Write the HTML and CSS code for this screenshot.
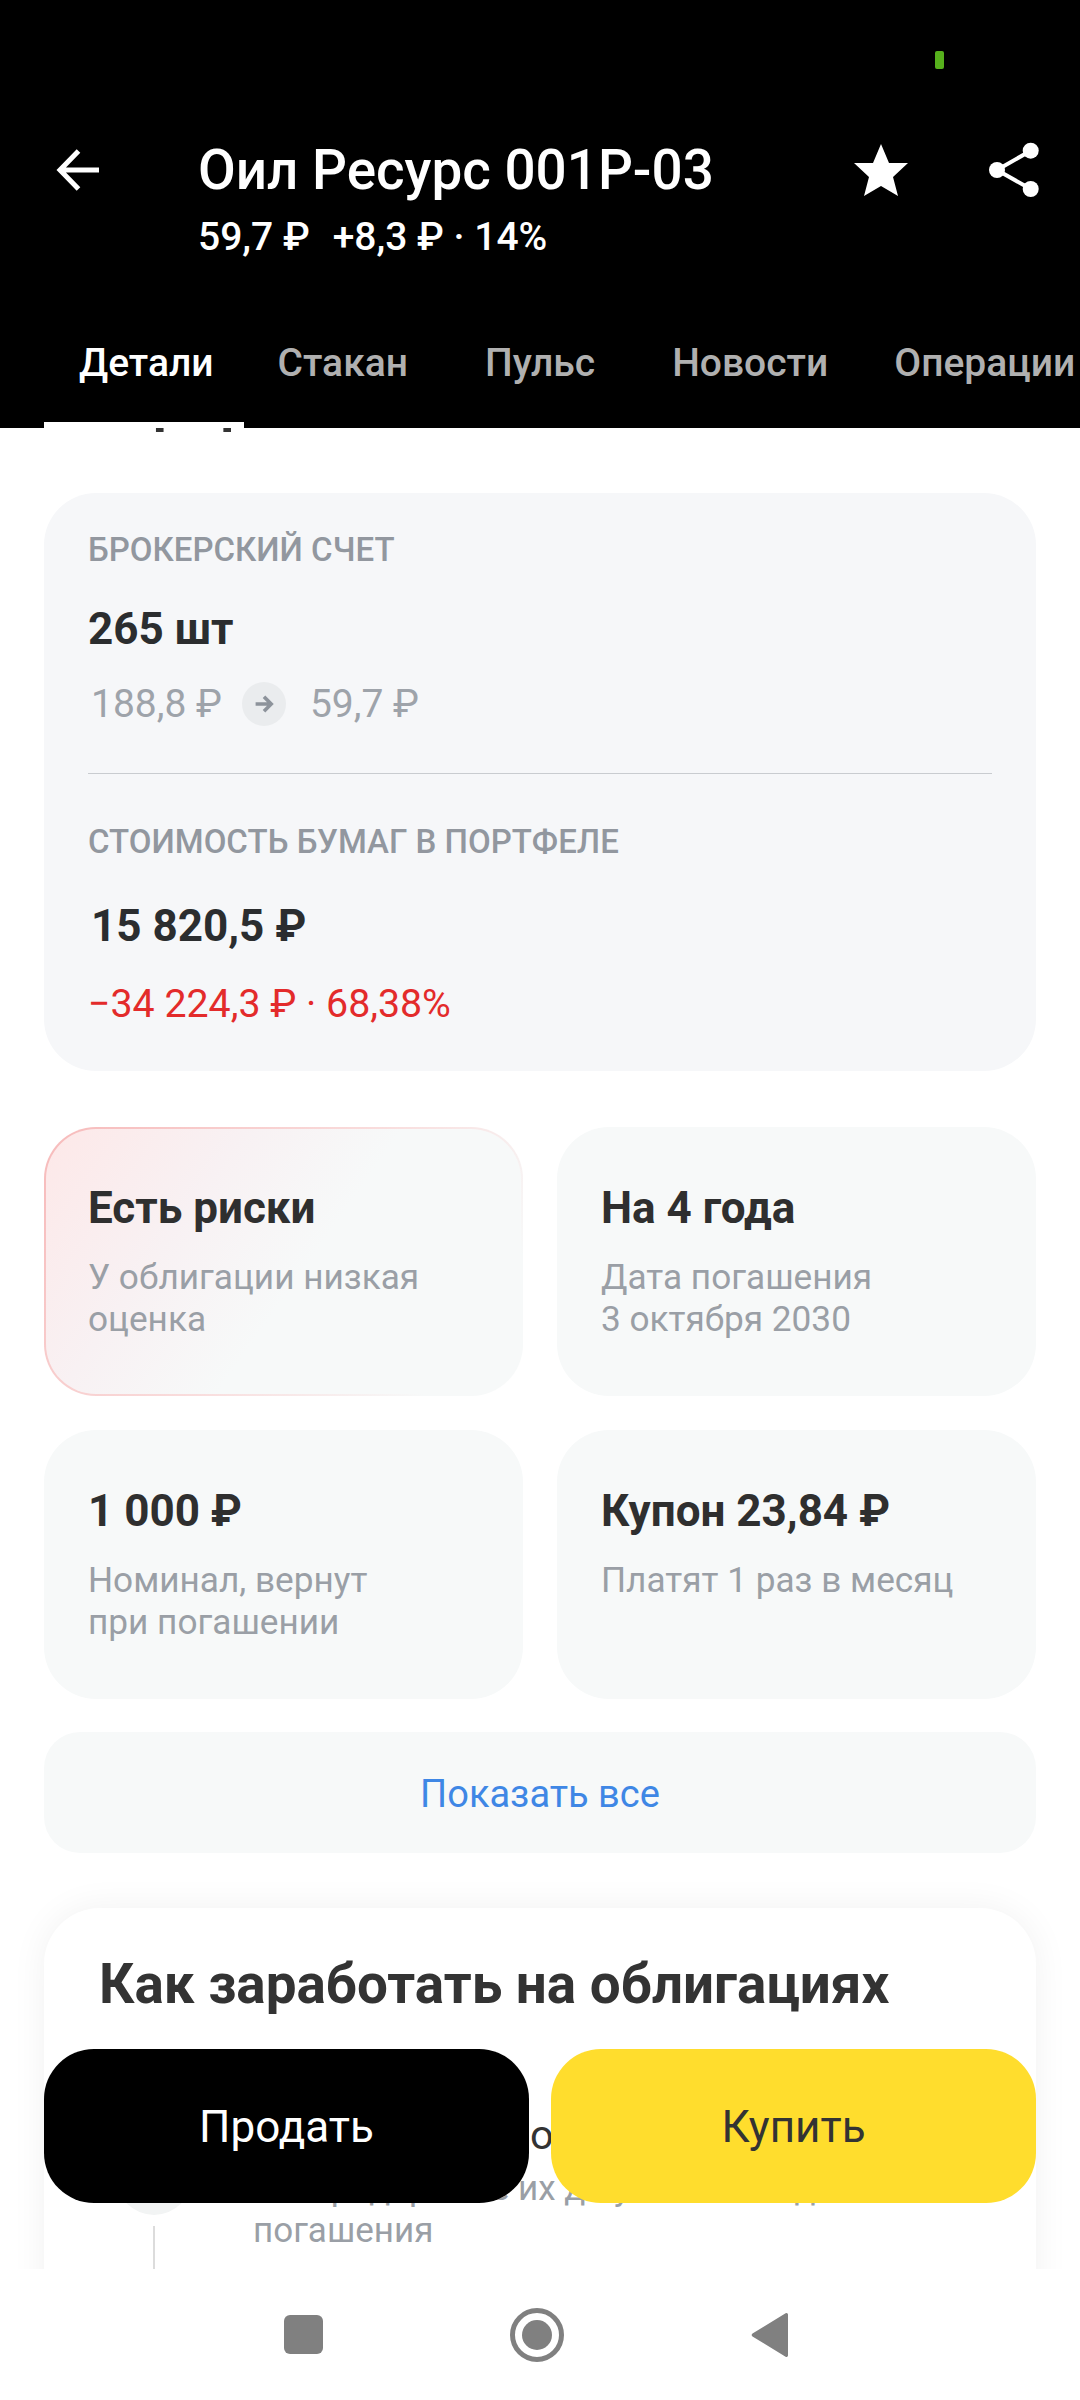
FILE: index.html
```html
<!DOCTYPE html>
<html lang="ru">
<head>
<meta charset="utf-8">
<title>Оил Ресурс 001P-03</title>
<link rel="stylesheet" href="styles.css">
</head>
<body>
<div class="page">
	<header class="top">
		<div class="status"><span class="signal"></span></div>
		<div class="bar">
			<svg class="back" viewBox="0 0 48 48" width="48" height="48"><path d="M45 24H6M24.500 5 6 24l18.500 19" fill="none" stroke="#fff" stroke-width="5"/></svg>
			<div class="heading">
				<div class="title">Оил Ресурс 001P-03</div>
				<div class="quote"><span>59,7 ₽</span><span>+8,3 ₽ · 14%</span></div>
			</div>
			<svg class="star" viewBox="0 0 54 52" width="54" height="52"><path d="M27 0l8 19h19L39 33l5 19-17-10-17 10 5-19L0 19h19z" fill="#fff"/></svg>
			<svg class="share" viewBox="0 0 50 55" width="50" height="55"><path d="M41.700 8.700 8 28l33.700 19" fill="none" stroke="#fff" stroke-width="4"/><circle cx="41.700" cy="8.700" r="8" fill="#fff"/><circle cx="8" cy="28" r="8" fill="#fff"/><circle cx="41.700" cy="47" r="8" fill="#fff"/></svg>
		</div>
		<nav class="tabs">
			<a class="tab active">Детали</a>
			<a class="tab">Стакан</a>
			<a class="tab">Пульс</a>
			<a class="tab">Новости</a>
			<a class="tab">Операции</a>
		</nav>
	</header>

	<main class="content">
		<h2 class="cut">В портфеле</h2>

		<section class="holding">
			<div class="label">БРОКЕРСКИЙ СЧЕТ</div>
			<div class="amount">265 шт</div>
			<div class="prices">
				<span>188,8 ₽</span>
				<span class="arrow"><svg viewBox="0 0 20 20" width="24" height="24"><path d="M3 10h13M10 4l6 6-6 6" fill="none" stroke="#8d939b" stroke-width="3"/></svg></span>
				<span>59,7 ₽</span>
			</div>
			<hr class="rule">
			<div class="label">СТОИМОСТЬ БУМАГ В ПОРТФЕЛЕ</div>
			<div class="amount sum">15 820,5 ₽</div>
			<div class="loss">−34 224,3 ₽ · 68,38%</div>
		</section>

		<section class="facts">
			<div class="fact risk">
				<div class="fact-title">Есть риски</div>
				<div class="fact-text">У облигации низкая<br>оценка</div>
			</div>
			<div class="fact">
				<div class="fact-title">На 4 года</div>
				<div class="fact-text">Дата погашения<br>3 октября 2030</div>
			</div>
			<div class="fact">
				<div class="fact-title">1 000 ₽</div>
				<div class="fact-text">Номинал, вернут<br>при погашении</div>
			</div>
			<div class="fact">
				<div class="fact-title">Купон 23,84 ₽</div>
				<div class="fact-text">Платят 1 раз в месяц</div>
			</div>
		</section>

		<a class="show-all">Показать все</a>

		<section class="guide">
			<h3 class="guide-title">Как заработать на облигациях</h3>
			<div class="step">
				<div class="step-mark"><span class="dot"></span><span class="line"></span></div>
				<div class="step-body">
					<div class="step-name">Вы покупаете облигации</div>
					<div class="step-text">Вы продержите их до указанной даты<br>погашения</div>
				</div>
			</div>
		</section>
	</main>

	<div class="actions">
		<a class="btn sell">Продать</a>
		<a class="btn buy">Купить</a>
	</div>

	<footer class="navbar">
		<svg viewBox="0 0 39 39" width="39" height="39"><rect width="39" height="39" rx="6" fill="#808080"/></svg>
		<svg viewBox="0 0 54 54" width="54" height="54"><circle cx="27" cy="27" r="24.500" fill="none" stroke="#808080" stroke-width="5"/><circle cx="27" cy="27" r="15" fill="#808080"/></svg>
		<svg viewBox="0 0 38 46" width="38" height="46"><path d="M37 2.500v41a1.500 1.500 0 0 1-2.400 1.200L1.500 24.500a2 2 0 0 1 0-3L34.600 1.300A1.500 1.500 0 0 1 37 2.500z" fill="#808080"/></svg>
	</footer>
</div>
</body>
</html>
```
FILE: styles.css
```css
*
{
	box-sizing: border-box;
}

body
{
	margin: 0;
	background: #fff;
	font-family: Roboto, "Noto Sans", sans-serif;
	color: #333;
}

.page
{
	position: relative;
	display: flex;
	flex-direction: column;
	width: 1080px;
	height: 2400px;
	overflow: hidden;
}

/* black header */
.top
{
	flex: none;
	height: 428px;
	background: #000;
	color: #fff;
}

.status
{
	display: flex;
	justify-content: flex-end;
	height: 130px;
	padding: 51px 136px 0 0;
}

.signal
{
	width: 9px;
	height: 18px;
	border-radius: 2px;
	background: #56b01c;
}

.bar
{
	display: flex;
	align-items: flex-start;
	height: 140px;
}

.back
{
	margin: 16px 0 0 54px;
}

.heading
{
	flex: 1;
	margin-left: 96px;
}

.title
{
	font-size: 54.800px;
	font-weight: 500;
	line-height: 80px;
}

.quote
{
	display: flex;
	gap: 23px;
	margin-top: 7px;
	font-size: 39px;
	font-weight: 500;
	line-height: 40px;
}

.star
{
	margin-top: 14px;
}

.share
{
	margin: 12px 41px 0 81px;
}

.tabs
{
	display: flex;
	padding-top: 63px;
	white-space: nowrap;
}

.tab
{
	position: relative;
	margin-right: 77px;
	font-size: 39px;
	font-weight: 500;
	line-height: 60px;
	color: #b0b0b0;
}

.tab:first-child
{
	margin-left: 79px;
	margin-right: 64px;
}

.tab:nth-child(4)
{
	margin-right: 66px;
}

.tab.active
{
	color: #fff;
}

.tab.active::after
{
	content: "";
	position: absolute;
	left: -35px;
	right: -30px;
	top: 89px;
	height: 6px;
	background: #fff;
}

/* scrolling part */
.content
{
	flex: 1;
	min-height: 0;
	overflow: hidden;
	padding: 0 44px;
}

.cut
{
	margin: -57px 0 0;
	font-size: 54px;
	font-weight: 700;
	line-height: 64px;
}

.holding
{
	margin-top: 58px;
	height: 578px;
	padding: 37px 44px 0;
	border-radius: 52px;
	background: #f6f7f9;
}

.label
{
	font-size: 33px;
	font-weight: 500;
	line-height: 40px;
	color: #92979f;
}

.amount
{
	margin-top: 34px;
	font-size: 44px;
	font-weight: 700;
	line-height: 50px;
	color: #2b2d2f;
}

.prices
{
	display: flex;
	align-items: center;
	margin-top: 25px;
	padding-left: 3px;
	font-size: 39px;
	line-height: 50px;
	color: #9ea3aa;
}

.arrow
{
	display: flex;
	align-items: center;
	justify-content: center;
	width: 44px;
	height: 44px;
	margin: 0 24px 0 20px;
	border-radius: 50%;
	background: #eaecee;
}

.rule
{
	margin: 44px 0 48px;
	border: 0;
	border-top: 1px solid #c9ccd0;
}

.sum
{
	margin-top: 39px;
	padding-left: 3px;
}

.loss
{
	margin-top: 28px;
	font-size: 39.300px;
	line-height: 50px;
	color: #e32b2b;
}

.facts
{
	display: grid;
	grid-template-columns: 479px 479px;
	grid-auto-rows: 269px;
	gap: 34px;
	margin-top: 56px;
}

.fact
{
	padding: 56px 44px 0;
	border-radius: 52px;
	background: #f7f9f9;
}

.risk
{
	border: 2px solid transparent;
	padding: 54px 42px 0;
	background:
		linear-gradient(125deg, #fde8e8 0%, #f8f1f3 30%, #f7f9f9 54%) padding-box,
		linear-gradient(125deg, #f7baba 0%, #f9dcdc 50%, #f7f9f9 85%) border-box;
}

.fact-title
{
	font-size: 44px;
	font-weight: 700;
	line-height: 50px;
	color: #2f2f2f;
}

.fact-text
{
	margin-top: 23px;
	font-size: 35.200px;
	line-height: 42px;
	color: #9a9fa6;
}

.show-all
{
	display: block;
	margin-top: 33px;
	height: 121px;
	border-radius: 36px;
	background: #f7f9f9;
	text-align: center;
	font-size: 38px;
	line-height: 125px;
	color: #3f87e5;
}

.guide
{
	margin-top: 55px;
	height: 600px;
	padding: 44px 55px 0;
	border-radius: 56px;
	background: #fff;
	box-shadow: 0 0 36px rgba(0, 0, 0, .06);
}

.guide-title
{
	margin: 0;
	font-size: 54.800px;
	font-weight: 700;
	line-height: 64px;
	color: #333;
}

.step
{
	display: flex;
	margin-top: 94px;
}

.step-mark
{
	display: flex;
	flex-direction: column;
	align-items: center;
	flex: none;
	width: 110px;
	margin-top: 29px;
}

.dot
{
	width: 76px;
	height: 76px;
	border-radius: 50%;
	background: #f2f4f4;
}

.line
{
	width: 2px;
	height: 120px;
	margin-top: 11px;
	background: #dcdcdc;
}

.step-body
{
	margin-left: 44px;
	white-space: nowrap;
}

.step-name
{
	font-size: 41.500px;
	line-height: 50px;
	color: #333;
}

.step-text
{
	margin-top: 8px;
	font-size: 35px;
	line-height: 42px;
	color: #9a9fa6;
}

/* over the content */
.actions
{
	position: absolute;
	left: 44px;
	right: 44px;
	top: 2049px;
	display: flex;
	gap: 22px;
}

.btn
{
	flex: 1;
	height: 154px;
	border-radius: 50px;
	text-align: center;
	font-size: 44px;
	line-height: 156px;
}

.sell
{
	background: #000;
	color: #fff;
}

.buy
{
	background: #ffdd2d;
	color: #333;
}

.navbar
{
	flex: none;
	display: flex;
	align-items: center;
	justify-content: center;
	gap: 187px;
	height: 131px;
	padding-right: 8px;
	background: #fff;
}
```
